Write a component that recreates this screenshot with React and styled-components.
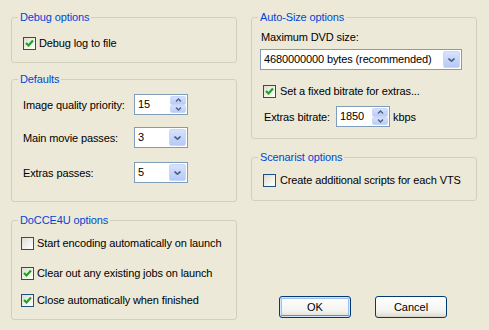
import styled, { createGlobalStyle } from 'styled-components';

const GlobalStyle = createGlobalStyle`
  html, body {
    margin: 0;
    padding: 0;
    background: #ece9d8;
  }
  body {
    font-family: Tahoma, "Liberation Sans", Arial, sans-serif;
    font-size: 11px;
    letter-spacing: -0.12px;
    color: #000;
  }
`;

const Page = styled.div`
  width: 489px;
  height: 330px;
  box-sizing: border-box;
  padding: 11px 0 10px 11px;
  display: grid;
  grid-template-columns: 226px 226px;
  column-gap: 14px;
  align-items: stretch;
`;

const Column = styled.div`
  display: flex;
  flex-direction: column;
`;

const Group = styled.fieldset`
  margin: ${p => p.$mt || 0}px 0 0 0;
  padding: 0;
  min-width: 0;
  box-sizing: border-box;
  height: ${p => p.$h}px;
  border: 1px solid #d0d0bf;
  border-radius: 3px;
`;

const Legend = styled.legend`
  margin-left: 6px;
  padding: 0 2px;
  font-size: 11px;
  line-height: 13px;
  color: #0046d5;
`;

const Body = styled.div`
  padding: ${p => p.$pt || 0}px 0 0 ${p => p.$pl || 0}px;
  display: flex;
  flex-direction: column;
  align-items: flex-start;
`;

const CheckRow = styled.label`
  display: flex;
  align-items: center;
  gap: ${p => p.$gap || 3}px;
  height: 13px;
  line-height: 13px;
  margin-top: ${p => p.$mt || 0}px;
  margin-left: ${p => p.$ml || 0}px;
  white-space: nowrap;
`;

const Box = styled.span`
  width: 13px;
  height: 13px;
  box-sizing: border-box;
  border: 1px solid #1c5180;
  background: linear-gradient(135deg, #dcdcd7 0%, #f0f0ea 50%, #ffffff 100%);
  display: flex;
  align-items: center;
  justify-content: center;
  flex: none;
`;

const FieldRow = styled.div`
  display: flex;
  align-items: center;
  margin-top: ${p => p.$mt || 0}px;
  margin-left: ${p => p.$ml || 0}px;
  white-space: nowrap;
`;

const Label = styled.span`
  width: ${p => p.$w}px;
  flex: none;
`;

const Plain = styled.span`
  display: block;
  line-height: 13px;
  margin-top: ${p => p.$mt || 0}px;
  margin-left: ${p => p.$ml || 0}px;
`;

const Field = styled.div`
  width: ${p => p.$w}px;
  height: 21px;
  box-sizing: border-box;
  border: 1px solid #7f9db9;
  background: #fff;
  display: flex;
  align-items: stretch;
  margin-top: ${p => p.$mt || 0}px;
  flex: none;
`;

const FieldText = styled.span`
  flex: 1;
  padding-left: 3px;
  line-height: 19px;
  white-space: nowrap;
  overflow: hidden;
`;

const SpinCol = styled.div`
  width: 16px;
  display: flex;
  flex-direction: column;
  padding: 1px 1px 1px 0;
`;

const SpinBtn = styled.div`
  flex: 1;
  box-sizing: border-box;
  border: 1px solid #c9d7fa;
  border-radius: 2px;
  background: linear-gradient(#d5e0fc, #b9cbf8);
  display: flex;
  align-items: center;
  justify-content: center;
`;

const DropBtn = styled.div`
  width: 17px;
  margin: 1px;
  box-sizing: border-box;
  border: 1px solid #c9d7fa;
  border-radius: 2px;
  background: linear-gradient(#d7e2fd, #b6c9f7);
  display: flex;
  align-items: center;
  justify-content: center;
`;

const Suffix = styled.span`
  margin-left: 3px;
`;

const ButtonRow = styled.div`
  margin-top: auto;
  margin-bottom: 2px;
  padding-left: 28px;
  display: flex;
  gap: 24px;
`;

const Button = styled.button`
  width: 72px;
  height: 22px;
  padding: 0;
  font: inherit;
  font-size: 11px;
  color: #000;
  border: 1px solid #003c74;
  border-radius: 3px;
  background: linear-gradient(#ffffff, #f3f3ef 70%, #e3e0d6 92%, #d6d0c5);
  box-shadow: ${p =>
    p.$default
      ? 'inset 0 0 0 1px #cee7ff, inset 0 -1px 0 1px #6982ee, inset 0 0 0 2px #a5bdf0'
      : 'none'};
`;

const Check = () => (
  <svg width="9" height="9" viewBox="0 0 9 9">
    <polyline points="1,4 3.5,6.5 8,1.5" fill="none" stroke="#21a121" strokeWidth="2.2" />
  </svg>
);

const CheckBox = ({ checked, children, mt, ml, gap }) => (
  <CheckRow $mt={mt} $ml={ml} $gap={gap}>
    <Box>{checked && <Check />}</Box>
    <span>{children}</span>
  </CheckRow>
);

const Chevron = ({ up }) => (
  <svg width="7" height="4" viewBox="0 0 7 4">
    <polyline
      points={up ? '0.5,3.5 3.5,0.8 6.5,3.5' : '0.5,0.5 3.5,3.2 6.5,0.5'}
      fill="none"
      stroke="#4d6185"
      strokeWidth="1.6"
    />
  </svg>
);

const SmallChevron = ({ up }) => (
  <svg width="7" height="4" viewBox="0 0 7 4">
    <polyline
      points={up ? '1,3.5 3.5,1 6,3.5' : '1,0.5 3.5,3 6,0.5'}
      fill="none"
      stroke="#4d6185"
      strokeWidth="1.4"
    />
  </svg>
);

const Spin = ({ value, w = 54, mt }) => (
  <Field $w={w} $mt={mt}>
    <FieldText>{value}</FieldText>
    <SpinCol>
      <SpinBtn><SmallChevron up /></SpinBtn>
      <SpinBtn><SmallChevron /></SpinBtn>
    </SpinCol>
  </Field>
);

const Combo = ({ value, w = 54, mt }) => (
  <Field $w={w} $mt={mt}>
    <FieldText>{value}</FieldText>
    <DropBtn><Chevron /></DropBtn>
  </Field>
);

export default function App() {
  return (
    <>
      <GlobalStyle />
      <Page>
        <Column>
          <Group $h={52}>
            <Legend>Debug options</Legend>
            <Body $pl={11} $pt={13}>
              <CheckBox checked>Debug log to file</CheckBox>
            </Body>
          </Group>

          <Group $h={129} $mt={10}>
            <Legend>Defaults</Legend>
            <Body $pl={11} $pt={8}>
              <FieldRow>
                <Label $w={111}>Image quality priority:</Label>
                <Spin value="15" />
              </FieldRow>
              <FieldRow $mt={12}>
                <Label $w={111}>Main movie passes:</Label>
                <Combo value="3" />
              </FieldRow>
              <FieldRow $mt={14}>
                <Label $w={111}>Extras passes:</Label>
                <Combo value="5" />
              </FieldRow>
            </Body>
          </Group>

          <Group $h={106} $mt={12}>
            <Legend>DoCCE4U options</Legend>
            <Body $pl={9} $pt={10}>
              <CheckBox>Start encoding automatically on launch</CheckBox>
              <CheckBox checked mt={17}>Clear out any existing jobs on launch</CheckBox>
              <CheckBox checked mt={14}>Close automatically when finished</CheckBox>
            </Body>
          </Group>
        </Column>

        <Column>
          <Group $h={128}>
            <Legend>Auto-Size options</Legend>
            <Body $pl={8} $pt={7}>
              <Plain $ml={1}>Maximum DVD size:</Plain>
              <Combo value="4680000000 bytes (recommended)" w={202} mt={5} />
              <CheckBox checked mt={15} ml={3} gap={4}>Set a fixed bitrate for extras...</CheckBox>
              <FieldRow $mt={8} $ml={4}>
                <Label $w={72}>Extras bitrate:</Label>
                <Spin value="1850" />
                <Suffix>kbps</Suffix>
              </FieldRow>
            </Body>
          </Group>

          <Group $h={50} $mt={12}>
            <Legend>Scenarist options</Legend>
            <Body $pl={11} $pt={10}>
              <CheckBox gap={4}>Create additional scripts for each VTS</CheckBox>
            </Body>
          </Group>

          <ButtonRow>
            <Button $default>OK</Button>
            <Button>Cancel</Button>
          </ButtonRow>
        </Column>
      </Page>
    </>
  );
}
